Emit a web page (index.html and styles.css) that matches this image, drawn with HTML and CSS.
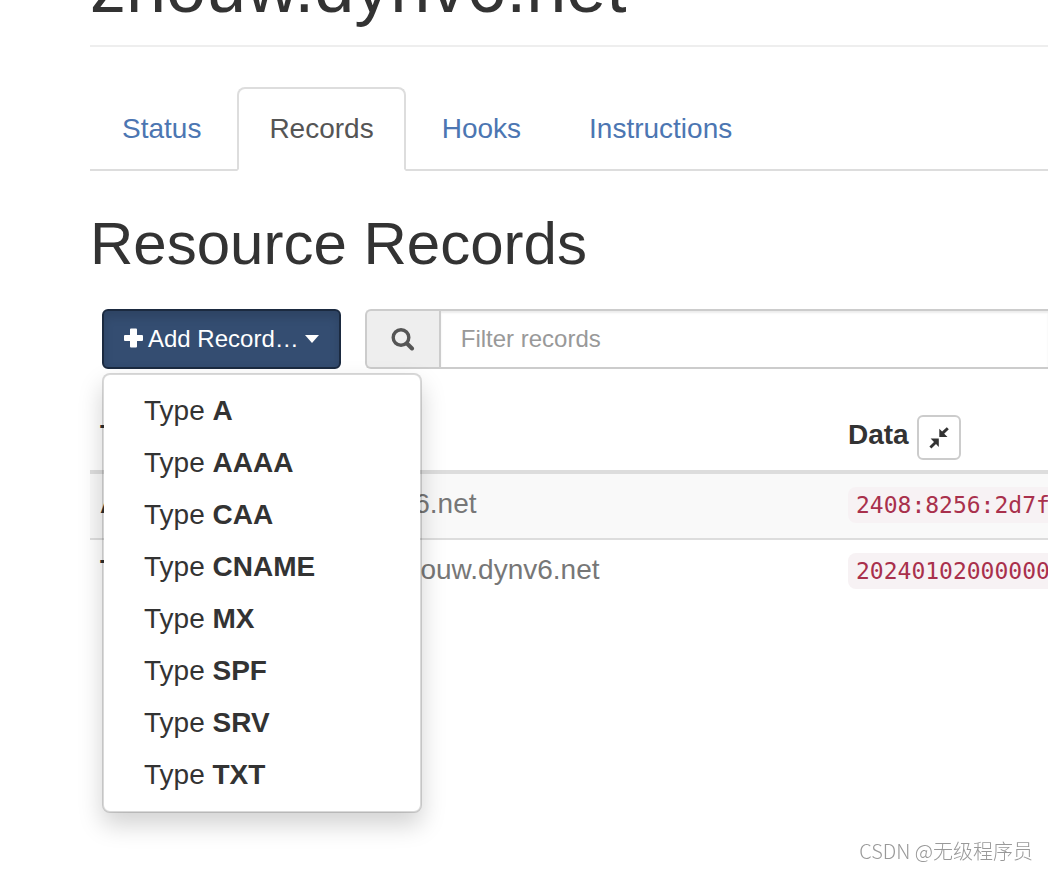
FILE: index.html
```
<!DOCTYPE html>
<html lang="en">
<head>
<meta charset="utf-8">
<title>zhouw.dynv6.net</title>
<link rel="stylesheet" href="styles.css">
</head>
<body>
<main class="container">
  <header class="page-header"><h1>zhouw.dynv6.net</h1></header>
  <nav>
    <ul class="tabs">
      <li><a class="tab" href="#status">Status</a></li>
      <li><a class="tab tab-active" href="#records" aria-current="page">Records</a></li>
      <li><a class="tab" href="#hooks">Hooks</a></li>
      <li><a class="tab" href="#instructions">Instructions</a></li>
    </ul>
  </nav>
  <h2>Resource Records</h2>
  <div class="toolbar">
    <div class="dropdown">
      <button class="btn-add" type="button" aria-haspopup="true" aria-expanded="true">
        <svg class="icon-plus" viewBox="0 0 24 24" aria-hidden="true"><path d="M7 1.500h5q1 0 1 1V8h5q1 0 1 1v4q0 1-1 1h-5v5.500q0 1-1 1H7q-1 0-1-1V14H1q-1 0-1-1V9q0-1 1-1h5V2.500q0-1 1-1z" fill="currentColor"/></svg>
        <span>Add Record…</span>
        <span class="caret"></span>
      </button>
      <ul class="menu">
        <li><a href="#a">Type <b>A</b></a></li>
        <li><a href="#aaaa">Type <b>AAAA</b></a></li>
        <li><a href="#caa">Type <b>CAA</b></a></li>
        <li><a href="#cname">Type <b>CNAME</b></a></li>
        <li><a href="#mx">Type <b>MX</b></a></li>
        <li><a href="#spf">Type <b>SPF</b></a></li>
        <li><a href="#srv">Type <b>SRV</b></a></li>
        <li><a href="#txt">Type <b>TXT</b></a></li>
      </ul>
    </div>
    <div class="search">
      <label class="search-addon" for="filter" aria-label="Filter records">
        <svg class="icon-search" viewBox="0 0 24 24" aria-hidden="true"><circle cx="10" cy="10.500" r="7.800" fill="none" stroke="currentColor" stroke-width="3.400"/><path d="M16 16.500l5 5" stroke="currentColor" stroke-width="4" stroke-linecap="round"/></svg>
      </label>
      <input class="search-input" id="filter" type="text" placeholder="Filter records">
    </div>
  </div>
  <table class="records">
    <thead>
      <tr>
        <th class="col-type">Type</th>
        <th class="col-name">Name</th>
        <th>
          <div class="data-head">
            <span>Data</span>
            <button class="btn-collapse" type="button" aria-label="Collapse data">
              <svg class="icon-collapse" viewBox="0 0 20 22" aria-hidden="true"><path d="M10.300 10V1.800l2.800 2.800L17.800.2l2 2-4.600 4.600 3.300 3.200zM9.800 11.500v8.400L7 17.100l-4.600 4.400-2-2L5 14.900l-3.400-3.400z" fill="currentColor"/></svg>
            </button>
          </div>
        </th>
      </tr>
    </thead>
    <tbody>
      <tr><th scope="row">AAAA</th><td>www.zhouw.dynv6.net</td><td><code>2408:8256:2d7f</code></td></tr>
      <tr><th scope="row">TXT</th><td>_dnsauth.www.zhouw.dynv6.net</td><td><code>20240102000000</code></td></tr>
    </tbody>
  </table>
</main>
<div class="watermark">CSDN @无级程序员</div>
</body>
</html>
```
FILE: styles.css
```
* { box-sizing: border-box; }
body {
  display: flow-root;
  min-height: 100vh;
  margin: 0;
  overflow-x: hidden;
  background: #fff;
  color: #333;
  font: 28px/40px "Liberation Sans", Arial, sans-serif;
}
ul { list-style: none; margin: 0; padding: 0; }
a { text-decoration: none; }
h1, h2 { margin: 0; font-weight: normal; }
.container { padding-left: 90px; }
.page-header {
  margin: -52px 0 40px;
  padding-bottom: 18px;
  border-bottom: 2px solid #eee;
}
h1 { font-size: 72px; line-height: 79px; }
h2 { margin: 40px 0 32px; font-size: 60px; line-height: 66px; }

.tabs { display: flex; gap: 4px; border-bottom: 2px solid #ddd; }
.tab {
  display: block;
  margin-bottom: -2px;
  padding: 20px 30px;
  border: 2px solid transparent;
  border-radius: 8px 8px 0 0;
  color: #4c76b2;
}
.tab-active { border-color: #ddd #ddd #fff; background: #fff; color: #555; }

.toolbar { display: flex; gap: 24px; padding-left: 12px; margin-bottom: 36px; }
.dropdown { position: relative; }
.btn-add {
  display: flex;
  align-items: center;
  height: 60px;
  padding: 0 20px;
  border: 2px solid #1b2a40;
  border-radius: 6px;
  background: #344d71;
  box-shadow: inset 0 6px 10px rgba(0, 0, 0, .125);
  color: #fff;
  font: 24px/36px "Liberation Sans", Arial, sans-serif;
  white-space: nowrap;
}
.icon-plus { width: 24px; height: 24px; }
.caret {
  margin-left: 6px;
  border: 7px solid transparent;
  border-top: 8px solid #fff;
  border-bottom: 0;
}
.menu {
  position: absolute;
  top: 100%;
  left: 0;
  z-index: 1;
  min-width: 320px;
  margin-top: 4px;
  padding: 10px 0;
  border: 2px solid rgba(0, 0, 0, .15);
  border-radius: 8px;
  background: #fff;
  background-clip: padding-box;
  box-shadow: 0 12px 24px rgba(0, 0, 0, .175);
}
.menu a { display: block; padding: 6px 40px; color: #333; }

.search { display: flex; flex: 1; height: 60px; }
.search-addon {
  display: flex;
  align-items: center;
  justify-content: center;
  width: 74px;
  border: 2px solid #ccc;
  border-right: 0;
  border-radius: 6px 0 0 6px;
  background: #eee;
  color: #555;
}
.icon-search { width: 24px; height: 24px; }
.search-input {
  flex: 1;
  min-width: 0;
  padding: 0 20px;
  border: 2px solid #ccc;
  border-right: 0;
  border-radius: 0;
  background: #fff;
  box-shadow: inset 0 2px 2px rgba(0, 0, 0, .075);
  font: 24px/36px "Liberation Sans", Arial, sans-serif;
}
.search-input::placeholder { color: #999; }

.records { width: 100%; table-layout: fixed; border-collapse: collapse; text-align: left; }
.records th, .records td { padding: 10px 10px 14px; vertical-align: top; white-space: nowrap; }
.records thead th { padding-bottom: 10px; border-bottom: 4px solid #ddd; }
.records td { color: #777; }
.records tbody tr + tr { border-top: 2px solid #ddd; }
.records tbody tr:first-child { background: #f9f9f9; }
.col-type { width: 101px; }
.col-name { width: 647px; }
.data-head { display: flex; align-items: flex-start; gap: 8px; }
.btn-collapse {
  display: flex;
  align-items: center;
  justify-content: center;
  width: 44px;
  height: 45px;
  padding: 0;
  border: 2px solid #ccc;
  border-radius: 6px;
  background: #fff;
  color: #333;
}
.icon-collapse { width: 20px; height: 22px; }
code {
  padding: 5px 8px;
  border-radius: 8px;
  background: #f7f2f4;
  color: #a9304c;
  font: 23px/28px "DejaVu Sans Mono", monospace;
}
.watermark {
  position: fixed;
  right: 15px;
  bottom: 4px;
  color: #999;
  font: 20px/30px "Noto Sans CJK SC", sans-serif;
  font-weight: 300;
}
```
